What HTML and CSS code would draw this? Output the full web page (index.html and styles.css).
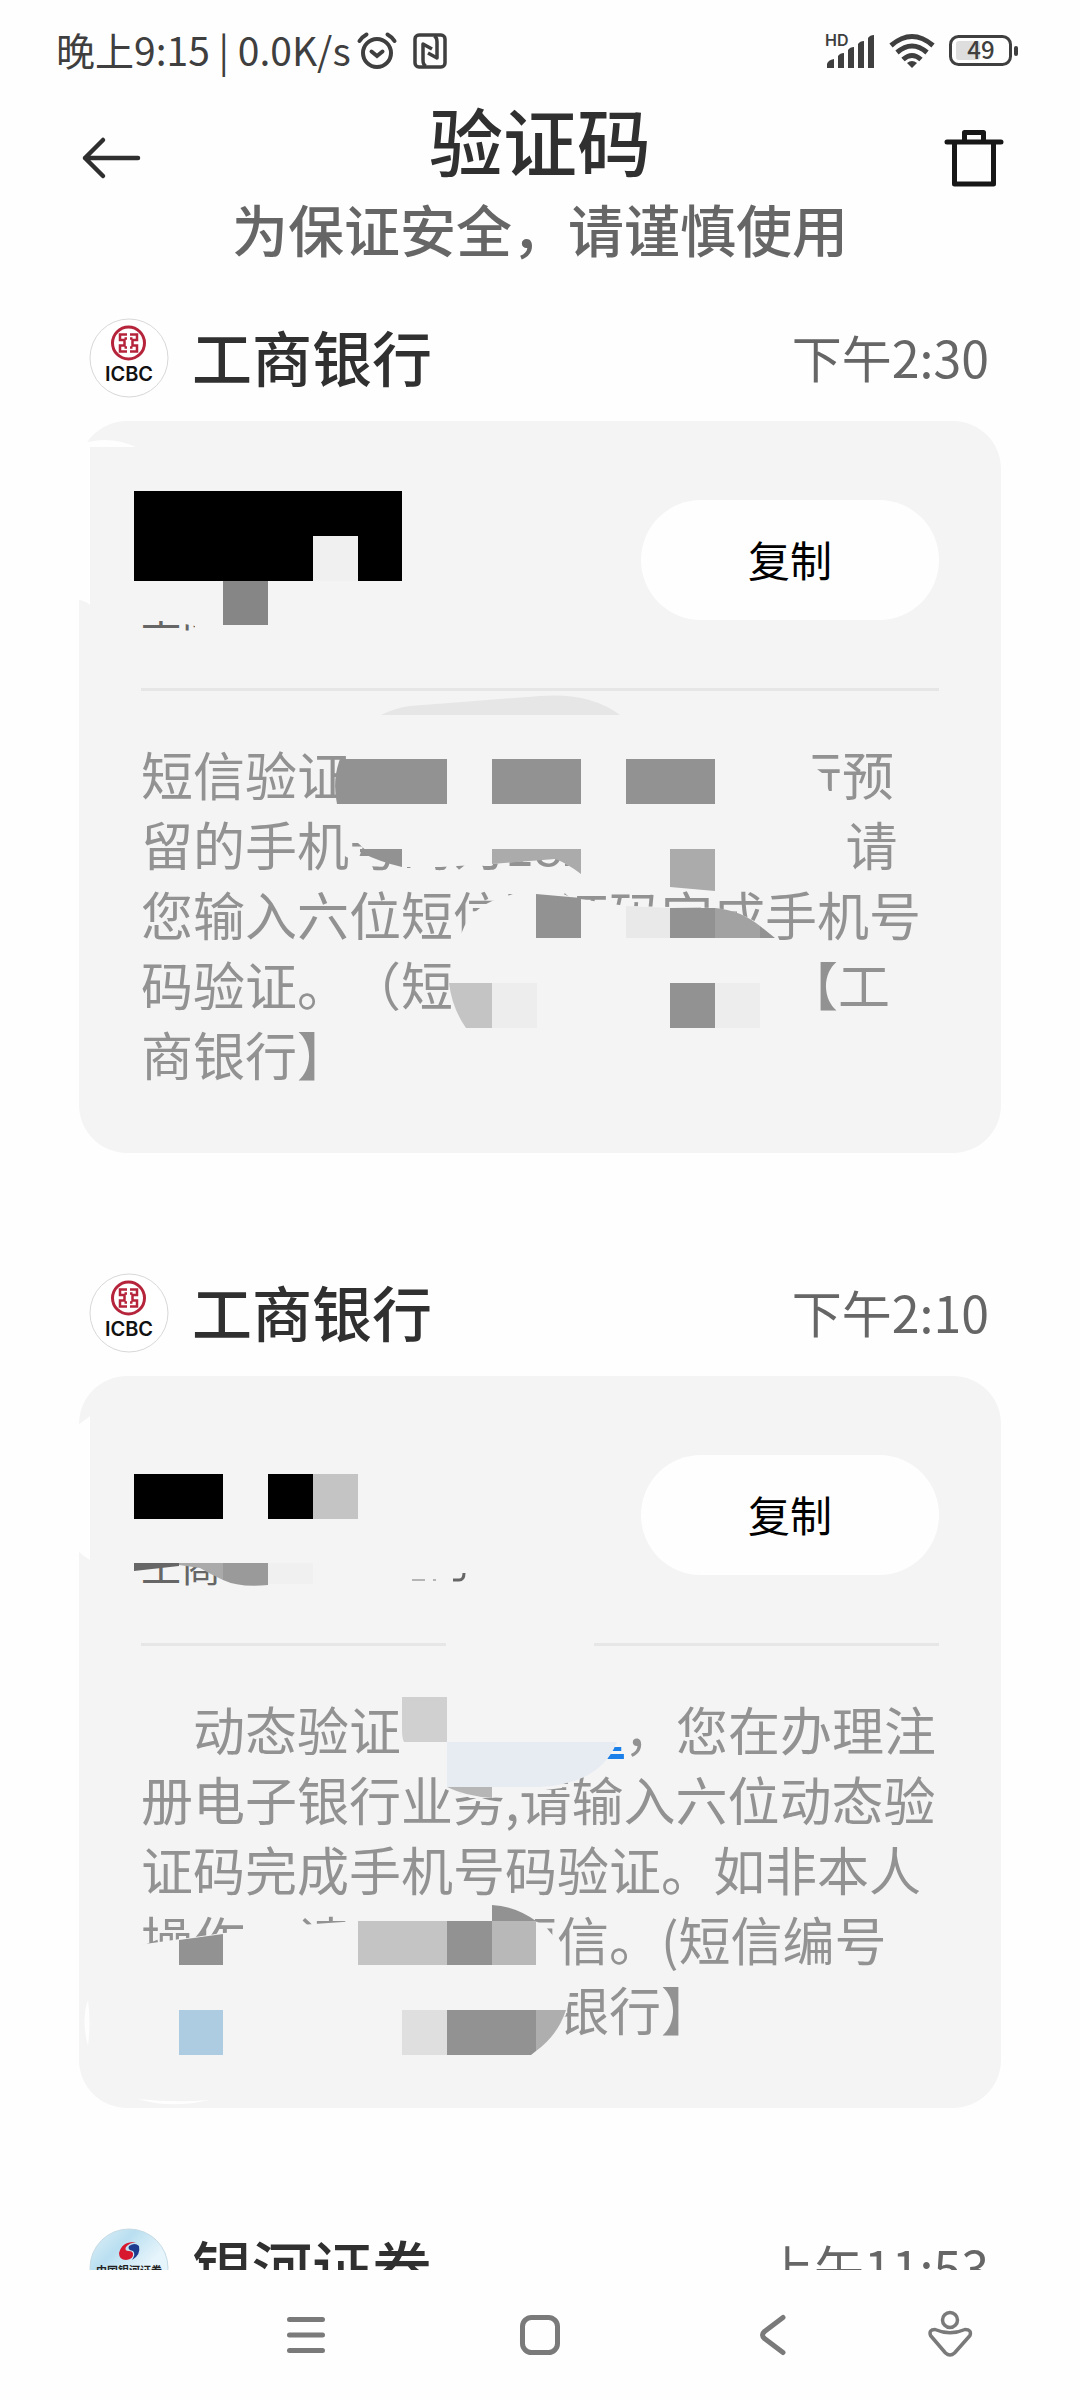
FILE: index.html
```html
<!DOCTYPE html>
<html lang="zh-CN">
<head>
    <meta charset="UTF-8">
    <meta name="viewport" content="width=device-width, initial-scale=1.0">
    <title>验证码</title>
    <link rel="stylesheet" href="styles.css">
</head>
<body>
    <div class="status-bar">
        <div class="status-left">
            <span>晚上9:15 | 0.0K/s</span>
            <svg width="40" height="38" viewBox="0 0 40 38" fill="none" stroke="#3f3f3f" stroke-width="4" stroke-linecap="round">
                <circle cx="20" cy="21" r="14"/>
                <path d="M14.500 19.500l5.500 4.500 5.500-4.500M2.500 9q2.500-4 7-6.500M37.500 9q-2.500-4-7-6.500"/>
            </svg>
            <svg class="nfc" width="34" height="36" viewBox="0 0 34 36" fill="none" stroke="#3f3f3f" stroke-width="3.500">
                <rect x="2" y="2" width="30" height="32" rx="4"/>
                <path d="M13 33q-3-1-3-6V11l9 5M21 3q3 1 3 6v16l-9-5" stroke-linejoin="round"/>
            </svg>
        </div>
        <div class="status-right">
            <svg width="50" height="34" viewBox="0 0 50 34" fill="#3f3f3f">
                <text x="0" y="12" class="hd-text">HD</text>
                <path d="M2 34v-4q1-4 7-5v9zM13 34V22q2-3 6-3v15zM23 34V16q2-3 6-3v21zM33 34V10q2-3 6-3v27zM43 34V4q2-3 6-3v33z"/>
            </svg>
            <svg width="46" height="34" viewBox="0 0 46 34" fill="none" stroke="#3f3f3f" stroke-width="5">
                <path d="M2 11.500q21-18 42 0M8 18.500q15-13 30 0M14 25.500q9-8 18 0"/>
                <path d="M18 29q5-4 10 0l-5 5z" fill="#3f3f3f" stroke="none"/>
            </svg>
            <svg width="70" height="32" viewBox="0 0 70 32">
                <rect x="1.500" y="1.500" width="60" height="28" rx="8" fill="none" stroke="#3f3f3f" stroke-width="3"/>
                <rect x="7" y="6" width="24" height="19" rx="3" fill="#dedede"/>
                <rect x="65" y="11" width="4" height="10" rx="2" fill="#3f3f3f"/>
                <text x="32" y="24" text-anchor="middle" class="battery-text">49</text>
            </svg>
        </div>
    </div>

    <header class="header">
        <button type="button" class="icon-button" aria-label="返回">
            <svg width="64" height="60" viewBox="0 0 64 60" fill="none" stroke="#2f2f2f" stroke-width="4.500" stroke-linecap="round" stroke-linejoin="round">
                <path d="M61 30H8M26 12L8 30l18 18"/>
            </svg>
        </button>
        <div class="header-text">
            <h1 class="title">验证码</h1>
            <p class="subtitle">为保证安全，请谨慎使用</p>
        </div>
        <button type="button" class="icon-button" aria-label="删除">
            <svg width="64" height="60" viewBox="0 0 64 60" fill="none" stroke="#171717" stroke-width="5" stroke-linecap="round" stroke-linejoin="round">
                <path d="M8 14h54M15.500 14v42h39V14M25.500 13V4.500h19V13"/>
            </svg>
        </button>
    </header>

    <main class="list">
        <section class="item">
            <div class="item-head">
                <svg class="avatar" viewBox="0 0 80 80">
                    <circle cx="40" cy="40" r="39" fill="#fff" stroke="#d8d8d8" stroke-width="1"/>
                    <circle cx="39.500" cy="25" r="16" fill="none" stroke="#b5243a" stroke-width="3"/>
                    <path d="M38 16.500H31v5.500h4.500v5.500H31v6h7M41 16.500h7v5.500h-4.500v5.500H48v6h-7M35.500 20.500H38M41 20.500h2.500M35.500 29.500H38M41 29.500h2.500" fill="none" stroke="#b5243a" stroke-width="2.500"/>
                    <text x="40" y="63" text-anchor="middle" class="icbc-text">ICBC</text>
                </svg>
                <h2 class="sender">工商银行</h2>
                <span class="time">下午2:30</span>
            </div>
            <div class="card">
                <div class="code-row">
                    <div class="code-box">
                        <div class="code"></div>
                        <div class="code-label">工商</div>
                    </div>
                    <button type="button" class="copy-button">复制</button>
                </div>
                <hr class="divider">
                <p class="message">短信验证<span class="hidden-441"></span>行预<br>留的手机号码为182<span class="hidden-254"></span>请<br>您输入六位短信验证码完成手机号<br>码验证。（短<span class="hidden-333"></span>【工<br>商银行】</p>
                <svg class="mosaic" viewBox="79 421 922 732" preserveAspectRatio="xMinYMin" aria-hidden="true">
                    <path fill="#fefefe" d="M78 442H88Q112 436 136 447H90V605Q84 600 78 600Z"/>
                    <path d="M134 491H402V581H134Z" fill="#000"/>
                    <path d="M313 536H358V581H313Z" fill="#f0f0f0"/>
                    <path d="M223 581H268V625H223Z" fill="#868686"/>
                    <!-- blanked text -->
                    <g fill="#f4f4f4">
                        <path d="M138 586H223V626H268V640H195V626L180 623L162 621L141 621Z"/>
                        <path d="M785 745H812V765L822 773L829 791H838V808H785Z"/>
                        <path d="M350 818V843H358L372 856L402 867L440 867L492 864L555 858Q565 862 581 874L610 882V818Z"/>
                        <path d="M462 932Q470 908 500 898Q520 893 524 886H556Q560 896 580 899L626 906L715 908Q750 912 776 938V945H455Z"/>
                    </g>
                    <path fill="#e6e6e6" d="M381 715Q395 708 410 706L540 696Q590 692 620 715Z"/>
                    <g fill="#929292">
                        <path d="M340 759Q332 780 337 804H447V759Z"/>
                        <path d="M492 759H581V804H492ZM626 759H715V804H626Z"/>
                        <path d="M360 849H402V867Q380 862 360 852Z"/>
                        <path d="M536 894L581 898V938H536ZM670 908H715V938H670ZM760 926L775 938H760Z"/>
                        <path d="M670 983H715V1028H670Z"/>
                    </g>
                    <path fill="#ababab" d="M492 849H581V874Q565 862 555 859L492 864ZM670 849H715V891L670 887Z"/>
                    <path fill="#e9e9e9" d="M626 906L670 908V938H626Z"/>
                    <path fill="#a2a2a2" d="M715 908Q740 910 760 926V938H715Z"/>
                    <path fill="#c4c4c4" d="M449 983H492V1028H466Q452 1008 449 983Z"/>
                    <path fill="#ededed" d="M492 983H537V1028H492ZM715 983H760V1028H715Z"/>
                </svg>
            </div>
        </section>

        <section class="item">
            <div class="item-head">
                <svg class="avatar" viewBox="0 0 80 80">
                    <circle cx="40" cy="40" r="39" fill="#fff" stroke="#d8d8d8" stroke-width="1"/>
                    <circle cx="39.500" cy="25" r="16" fill="none" stroke="#b5243a" stroke-width="3"/>
                    <path d="M38 16.500H31v5.500h4.500v5.500H31v6h7M41 16.500h7v5.500h-4.500v5.500H48v6h-7M35.500 20.500H38M41 20.500h2.500M35.500 29.500H38M41 29.500h2.500" fill="none" stroke="#b5243a" stroke-width="2.500"/>
                    <text x="40" y="63" text-anchor="middle" class="icbc-text">ICBC</text>
                </svg>
                <h2 class="sender">工商银行</h2>
                <span class="time">下午2:10</span>
            </div>
            <div class="card">
                <div class="code-row">
                    <div class="code-box">
                        <div class="code"></div>
                        <div class="code-label">工商</div>
                    </div>
                    <button type="button" class="copy-button">复制</button>
                </div>
                <hr class="divider">
                <p class="message">　动态验证<span class="hidden-194"></span><a href="#" class="code-link">2</a>，您在办理注<br>册电子银行业务,请输入六位动态验<br>证码完成手机号码验证。如非本人<br>操作，请忽略本短信。(短信编号<br><span class="hidden-416"></span>银行】</p>
                <svg class="mosaic" viewBox="79 1376 922 732" preserveAspectRatio="xMinYMin" aria-hidden="true">
                    <g fill="#fefefe">
                        <path d="M78 1425L90 1416V1560Q84 1557 78 1551Z"/>
                        <path d="M88 2000Q81 2020 88 2046Q91 2022 88 2000Z"/>
                        <path d="M138 2099Q175 2103 210 2100Q170 2109 138 2099Z"/>
                    </g>
                    <path fill="#000" d="M134 1474H223V1519H134ZM268 1474H313V1519H268Z"/>
                    <path fill="#c4c4c4" d="M313 1474H358V1519H313Z"/>
                    <!-- blanked text -->
                    <g fill="#f4f4f4">
                        <path d="M138 1535H270V1564H138Z"/>
                        <path d="M446 1638H594V1650H446Z"/>
                        <path d="M590 1705H626V1747H614L606 1761H590Z"/>
                        <path d="M449 1770H562V1788L520 1793L492 1798H470L449 1788Z"/>
                        <path d="M138 1945L223 1933L245 1932V1905H300V1925L357 1921V1905H535V1921L545 1926L555 1938V1970H138Z"/>
                        <path d="M552 1983H571L569 2000L566 2015L557 2026H552Z"/>
                    </g>
                    <path fill="#666" d="M134 1563H179V1566L134 1571Z"/>
                    <path fill="#aaa" d="M179 1563H223V1580Q210 1574 200 1568L179 1565Z"/>
                    <path fill="#9a9a9a" d="M223 1563H268V1585Q240 1588 223 1580Z"/>
                    <path fill="#f0f0f0" d="M268 1563H313V1584H268Z"/>
                    <path fill="none" stroke="#666" stroke-width="3" d="M453 1580h6q5 0 5-7"/>
                    <path fill="none" stroke="#777" stroke-width="1" d="M412 1580h13M433 1580h3"/>
                    <path fill="#d0d0d0" d="M402 1697H447V1742H404Q402 1738 402 1730Z"/>
                    <path fill="#e7ebf2" d="M447 1742H617Q600 1784 540 1787H447Z"/>
                    <path fill="#b6b6b6" d="M447 1787H492V1798Q465 1796 447 1787Z"/>
                    <g fill="#929292">
                        <path d="M179 1940L223 1934V1965H179ZM447 1921H492V1965H447Z"/>
                        <path d="M492 1905Q515 1906 536 1921H492Z"/>
                        <path d="M447 2010H536V2051L531 2055H447Z"/>
                    </g>
                    <path fill="#c4c4c4" d="M358 1921H447V1965H358Z"/>
                    <path fill="#b8b8b8" d="M492 1921H536V1965H492Z"/>
                    <path fill="#adcbe1" d="M179 2010H223V2055H179Z"/>
                    <path fill="#dfdfdf" d="M402 2010H447V2055H402Z"/>
                    <path fill="#aeaeae" d="M536 2010H566Q558 2035 536 2051Z"/>
                </svg>
            </div>
        </section>

        <section class="item">
            <div class="item-head">
                <svg class="avatar" viewBox="0 0 80 80">
                    <defs>
                        <linearGradient id="sky" x1="0" y1="0" x2="1" y2="1">
                            <stop offset="0" stop-color="#e3f1f9"/>
                            <stop offset="0.300" stop-color="#b9dff0"/>
                            <stop offset="0.600" stop-color="#e6f4fb"/>
                        </linearGradient>
                    </defs>
                    <circle cx="40" cy="40" r="39" fill="url(#sky)" stroke="#c5dbe6" stroke-width="1"/>
                    <path fill="#d8182f" d="M47 14Q33 13 30 25Q30 32 37 32Q45 31 44 25Q43 23 40 23Q35 23 37 19Q40 15 47 14Z"/>
                    <path fill="#1d3c8f" d="M40 18Q46 14 50 18Q52 27 43 32Q47 26 44 23Q38 22 40 18Z"/>
                    <text x="40" y="47" text-anchor="middle" class="galaxy-text">中国银河证券</text>
                </svg>
                <h2 class="sender">银河证券</h2>
                <span class="time">上午11:53</span>
            </div>
        </section>
    </main>

    <nav class="nav-bar">
        <button type="button" class="nav-button" aria-label="菜单">
            <svg width="48" height="48" viewBox="0 0 48 48"><path d="M7.500 8.500h33M7.500 24h33M7.500 39.500h33" stroke-width="5"/></svg>
        </button>
        <button type="button" class="nav-button" aria-label="主页">
            <svg width="48" height="48" viewBox="0 0 48 48"><rect x="6.500" y="6.500" width="35" height="35" rx="9" stroke-width="5"/></svg>
        </button>
        <button type="button" class="nav-button" aria-label="后退">
            <svg width="48" height="48" viewBox="0 0 48 48"><path d="M33 6.500L14.500 20.500q-4 3.500 0 7L33 41.500" stroke-width="5"/></svg>
        </button>
        <button type="button" class="nav-button" aria-label="辅助功能">
            <svg width="48" height="48" viewBox="0 0 48 48" stroke-width="3.500">
                <circle cx="24" cy="9" r="7.500"/>
                <path d="M9 18.500q15 6.500 30 0 7 0 5 6L28.500 42q-4.500 4-9 0L4.500 24.500q-2-6 4.500-6z"/>
            </svg>
        </button>
    </nav>
</body>
</html>
```
FILE: styles.css
```css
* {
    margin: 0;
    padding: 0;
    box-sizing: border-box;
}
body {
    background: #fefefe;
    color: #303030;
    font-family: "Noto Sans CJK SC", sans-serif;
    text-spacing-trim: space-all;
    display: flex;
    flex-direction: column;
    height: 100vh;
}
button {
    border: none;
    background: none;
    font-family: inherit;
    cursor: pointer;
}
svg {
    display: block;
    flex-shrink: 0;
    overflow: visible;
}

/* status bar */
.status-bar {
    display: flex;
    justify-content: space-between;
    align-items: center;
    height: 50px;
    margin-top: 26px;
    padding: 0 61px 0 56px;
    color: #3f3f3f;
}
.status-left {
    display: flex;
    align-items: center;
    gap: 6px;
    font-size: 39px;
    line-height: 50px;
}
.status-left span {
    padding-bottom: 4px;
}
.nfc {
    margin-left: 10px;
}
.status-right {
    display: flex;
    align-items: center;
    gap: 14px;
}
.hd-text {
    font: 600 16px "Inter", sans-serif;
}
.battery-text {
    font: 500 24px "Noto Sans CJK SC", sans-serif;
    fill: #3f3f3f;
}

/* header */
.header {
    display: flex;
    justify-content: space-between;
    align-items: flex-start;
    padding: 21px 77px 0;
}
.icon-button {
    display: flex;
    align-items: center;
    height: 122px;
}
.header-text {
    display: flex;
    flex-direction: column;
    gap: 17px;
    text-align: center;
}
.title {
    font-size: 74px;
    font-weight: 500;
    line-height: 84px;
}
.subtitle {
    font-size: 56px;
    font-weight: 500;
    line-height: 60px;
    color: #666;
}

/* message list */
.list {
    flex: 1;
    min-height: 0;
    overflow: hidden;
    padding: 61px 79px 0;
}
.item {
    margin-bottom: 121px;
}
.item-head {
    display: flex;
    align-items: center;
    height: 78px;
    margin-bottom: 24px;
    padding: 0 12px 0 10px;
}
.avatar {
    width: 80px;
    height: 80px;
}
.icbc-text {
    font: 600 20px "Inter", sans-serif;
    fill: #111;
}
.galaxy-text {
    font: 700 11px "Noto Sans CJK SC", sans-serif;
    fill: #222;
}
.sender {
    flex: 1;
    margin-left: 23px;
    padding-bottom: 4px;
    font-size: 60px;
    font-weight: 500;
    line-height: 78px;
}
.time {
    padding-bottom: 4px;
    font-size: 50px;
    line-height: 78px;
    color: #666;
}
.card {
    position: relative;
    padding: 64px 62px;
    background: #f4f4f4;
    border-radius: 48px;
}
.code-row {
    display: flex;
    justify-content: space-between;
    align-items: center;
}
.code {
    height: 100px;
}
.code-label {
    font-size: 40px;
    line-height: 50px;
    color: #666;
}
.copy-button {
    width: 298px;
    height: 120px;
    padding-bottom: 4px;
    border-radius: 60px;
    background: #fefefe;
    font-size: 42px;
    color: #000;
}
.divider {
    height: 3px;
    margin: 53px 0 48px;
    border: none;
    background: #e6e6e6;
}
.message {
    font-size: 52px;
    line-height: 70px;
    color: #929292;
    white-space: nowrap;
}
.code-link {
    color: #1a7fe8;
}
.mosaic {
    position: absolute;
    top: 0;
    left: 0;
    width: 100%;
    height: 100%;
}

/* removed parts of the messages */
.hidden-194,
.hidden-254,
.hidden-333,
.hidden-416,
.hidden-441 {
    display: inline-block;
}
.hidden-194 {
    width: 194px;
}
.hidden-254 {
    width: 254px;
}
.hidden-333 {
    width: 333px;
}
.hidden-416 {
    width: 416px;
}
.hidden-441 {
    width: 441px;
}

/* system navigation */
.nav-bar {
    display: grid;
    grid-template-columns: 2fr 2fr 2fr 1fr;
    height: 130px;
    padding: 0 72px 0 189px;
}
.nav-button {
    display: flex;
    justify-content: center;
    align-items: center;
}
.nav-button svg {
    fill: none;
    stroke: #7a7a7a;
    stroke-linecap: round;
    stroke-linejoin: round;
}
```
